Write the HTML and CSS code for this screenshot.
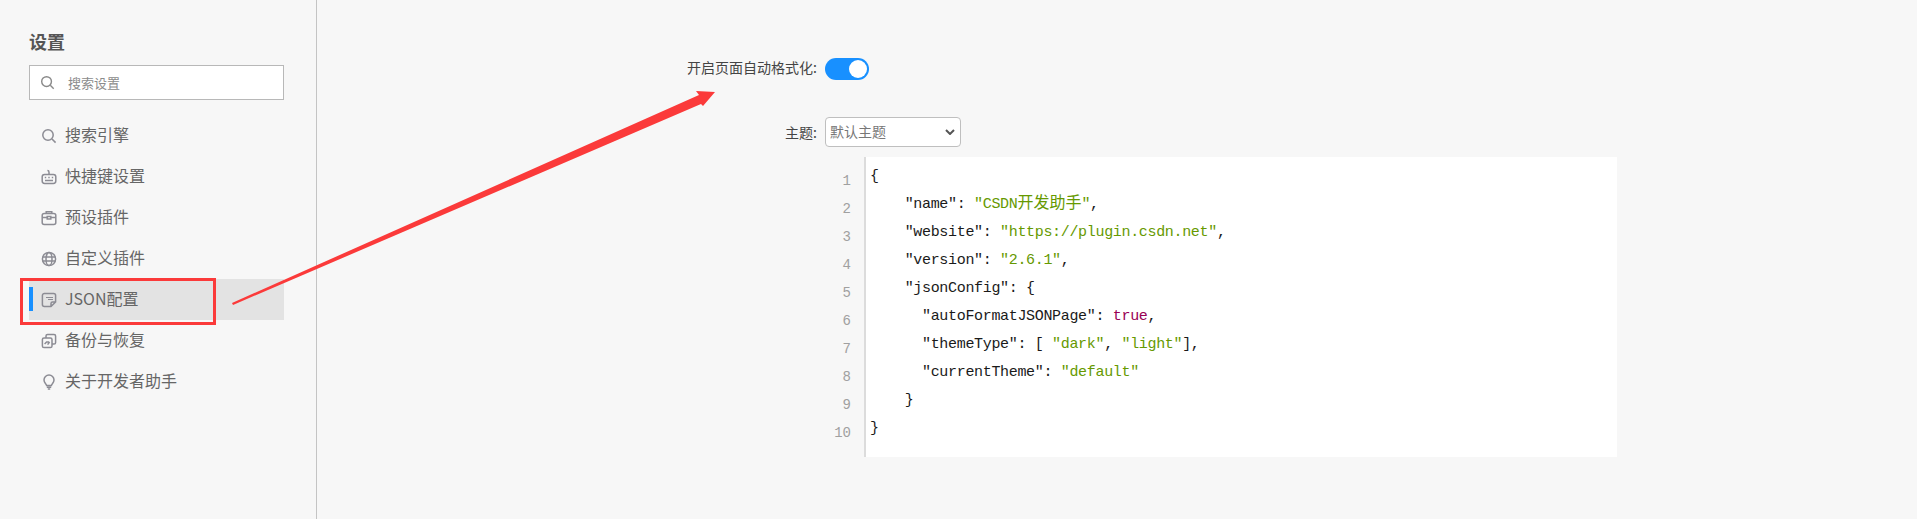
FILE: index.html
```html
<!DOCTYPE html>
<html lang="zh-CN">
<head>
<meta charset="utf-8">
<title>设置</title>
<link rel="stylesheet" href="styles.css">
</head>
<body>
<div class="page">
  <aside class="sidebar">
    <h1 class="title">设置</h1>
    <div class="search">
      <svg class="search-icon" viewBox="0 0 16 16"><circle cx="7" cy="7" r="5.2"/><path d="M11 11l3.6 3.6"/></svg>
      <span class="search-text">搜索设置</span>
    </div>
    <nav class="menu">
      <a class="item">
        <svg class="icon" viewBox="0 0 16 16"><circle cx="7" cy="7" r="5.2"/><path d="M11 11l3.6 3.6"/></svg>
        <span>搜索引擎</span>
      </a>
      <a class="item">
        <svg class="icon" viewBox="0 0 16 16"><rect x="1.2" y="5.4" width="13.6" height="9" rx="2.4"/><path d="M8 5.4V3.2Q8 1.6 6.4 1.6M3.8 8.4h1.4M7.3 8.4h1.4M10.8 8.4h1.4M4 11.4h8"/></svg>
        <span>快捷键设置</span>
      </a>
      <a class="item">
        <svg class="icon" viewBox="0 0 16 16"><rect x="1.2" y="3.6" width="13.6" height="10.8" rx="2"/><path d="M5.2 3.6V1.8h5.6v1.8M1.2 7.6h5M9.8 7.6h5M6.2 6.6h3.6v2.4H6.2z"/></svg>
        <span>预设插件</span>
      </a>
      <a class="item">
        <svg class="icon" viewBox="0 0 16 16"><circle cx="8" cy="8" r="6.6"/><ellipse cx="8" cy="8" rx="3" ry="6.6"/><path d="M1.6 6h12.8M1.6 10h12.8"/></svg>
        <span>自定义插件</span>
      </a>
      <a class="item active">
        <svg class="icon" viewBox="0 0 16 16"><path d="M10 14.6H3.4a2 2 0 0 1-2-2V3.4a2 2 0 0 1 2-2h9.2a2 2 0 0 1 2 2V10zM14.6 10H11.5a1.5 1.5 0 0 0-1.5 1.5v3.1"/><path class="thin" d="M5 5.5h7M7 7.5h5"/></svg>
        <span>JSON配置</span>
      </a>
      <a class="item">
        <svg class="icon" viewBox="0 0 16 16"><path d="M5 5V3a1.6 1.6 0 0 1 1.6-1.6H13A1.6 1.6 0 0 1 14.6 3v6.4A1.6 1.6 0 0 1 13 11h-2"/><rect x="1.4" y="5" width="9.6" height="9.6" rx="1.6"/><path d="M3.6 11l2-2h2.6M8.6 9l-2 2.6"/></svg>
        <span>备份与恢复</span>
      </a>
      <a class="item">
        <svg class="icon" viewBox="0 0 16 16"><path d="M5.6 11.4C5.4 9.8 3 9 3 6a5 5 0 0 1 10 0c0 3-2.4 3.8-2.6 5.4zM5.8 13.2h4.4M6.8 15h2.4"/></svg>
        <span>关于开发者助手</span>
      </a>
    </nav>
  </aside>
  <main class="content">
    <div class="row row-switch">
      <label class="label">开启页面自动格式化:</label>
      <span class="switch"><span class="knob"></span></span>
    </div>
    <div class="row row-select">
      <label class="label">主题:</label>
      <div class="select">
        <span class="select-text">默认主题</span>
        <svg class="chevron" viewBox="0 0 10 6"><path d="M1 1l4 4 4-4"/></svg>
      </div>
    </div>
    <div class="code-wrap">
      <div class="gutter">
        <span>1</span><span>2</span><span>3</span><span>4</span><span>5</span><span>6</span><span>7</span><span>8</span><span>9</span><span>10</span>
      </div>
      <div class="code">
        <div class="line">{</div>
        <div class="line">    <i class="key">"name"</i>: <i class="str">"CSDN<b class="cjk">开发助手</b>"</i>,</div>
        <div class="line">    <i class="key">"website"</i>: <i class="str">"https://plugin.csdn.net"</i>,</div>
        <div class="line">    <i class="key">"version"</i>: <i class="str">"2.6.1"</i>,</div>
        <div class="line">    <i class="key">"jsonConfig"</i>: {</div>
        <div class="line">      <i class="key">"autoFormatJSONPage"</i>: <i class="bool">true</i>,</div>
        <div class="line">      <i class="key">"themeType"</i>: [ <i class="str">"dark"</i>, <i class="str">"light"</i>],</div>
        <div class="line">      <i class="key">"currentTheme"</i>: <i class="str">"default"</i></div>
        <div class="line">    }</div>
        <div class="line">}</div>
      </div>
    </div>
  </main>
</div>
<svg class="annotation" viewBox="0 0 1917 519">
  <rect class="note-box" x="21.5" y="279.5" width="193" height="44"/>
  <polygon class="note-arrow" points="232,303 699,95 696,91 715,92 703,106 701,104 233,305"/>
</svg>
</body>
</html>
```
FILE: styles.css
```css
* { box-sizing: border-box; }
html, body { margin: 0; }
body {
  position: relative;
  height: 519px;
  overflow: hidden;
  background: #f7f7f7;
  font-family: "Noto Sans CJK SC", "Liberation Sans", sans-serif;
  color: #333;
}
.page { display: flex; height: 519px; }
.sidebar {
  width: 317px;
  flex: none;
  padding: 28px 32px 0 29px;
  border-right: 1px solid #c4c4c4;
}
.title {
  margin: 0 0 11px;
  height: 26px;
  font-size: 18px;
  line-height: 26px;
  font-weight: 700;
  color: #555;
}
.search {
  display: flex;
  align-items: center;
  height: 35px;
  padding-left: 10px;
  background: #fff;
  border: 1px solid #b8b8b8;
}
.search-icon { width: 15px; height: 15px; margin-right: 13px; fill: none; stroke: #8a8a8a; stroke-width: 1.5; }
.search-text { font-size: 13px; color: #8c8c8c; }
.menu { display: flex; flex-direction: column; margin-top: 15px; }
.item {
  position: relative;
  display: flex;
  align-items: center;
  height: 41px;
  padding-left: 12px;
  font-size: 16px;
  line-height: 39px;
  color: #666;
}
.item span { position: relative; top: -1px; }
.item.active { background: #e3e3e3; }
.item.active::before {
  content: "";
  position: absolute;
  left: 0;
  top: 8px;
  width: 4px;
  height: 24px;
  background: #1890ff;
}
.icon { width: 16px; height: 16px; margin-right: 8px; flex: none; fill: none; stroke: #8c8c94; stroke-width: 1.5; }
.icon .thin { stroke-width: 1; }
.content { flex: 1; padding: 58px 0 0 508px; }
.row { display: flex; align-items: center; }
.label {
  width: 184px;
  margin-left: -184px;
  padding-right: 8px;
  text-align: right;
  font-size: 14px;
  line-height: 20px;
  color: #444;
}
.row-switch { height: 22px; }
.row-switch .label { margin-bottom: 4px; }
.row-select { height: 30px; margin-top: 37px; }
.switch {
  position: relative;
  display: block;
  width: 44px;
  height: 22px;
  border-radius: 11px;
  background: #1890ff;
}
.knob {
  position: absolute;
  top: 2px;
  right: 2px;
  width: 18px;
  height: 18px;
  border-radius: 50%;
  background: #fff;
}
.select {
  display: flex;
  align-items: center;
  justify-content: space-between;
  width: 136px;
  height: 30px;
  padding: 0 5px 0 4px;
  background: #fff;
  border: 1px solid #bfbfbf;
  border-radius: 4px;
  font-size: 14px;
  color: #777;
}
.select-text { margin-bottom: 2px; }
.chevron { width: 10px; height: 6px; fill: none; stroke: #555; stroke-width: 2; }
.code-wrap {
  position: relative;
  display: flex;
  width: 792px;
  height: 300px;
  margin-top: 10px;
  padding-left: 39px;
}
.gutter {
  position: absolute;
  left: 0;
  top: 10px;
  width: 39px;
  padding-right: 13px;
  display: flex;
  flex-direction: column;
  align-items: flex-end;
  font-family: "Liberation Mono", monospace;
  font-size: 14px;
  line-height: 28px;
  color: #a0a0a0;
}
.code {
  flex: 1;
  padding: 6px 0 0 4px;
  background: #fff;
  border-left: 2px solid #dcdcdc;
  font-family: "Liberation Mono", monospace;
  font-size: 15px;
  letter-spacing: -0.33px;
  color: #1a1a1a;
}
.line { height: 28px; line-height: 28px; white-space: pre; }
.code i { font-style: normal; }
.cjk { font-family: "Noto Sans CJK SC", sans-serif; font-size: 16px; font-weight: 400; line-height: 1; letter-spacing: 0; }
.str { color: #669900; }
.bool { color: #990055; }
.annotation { position: absolute; left: 0; top: 0; width: 1917px; height: 519px; pointer-events: none; }
.note-box { fill: none; stroke: #fb3a3a; stroke-width: 3; }
.note-arrow { fill: #fb3a3a; }
```
